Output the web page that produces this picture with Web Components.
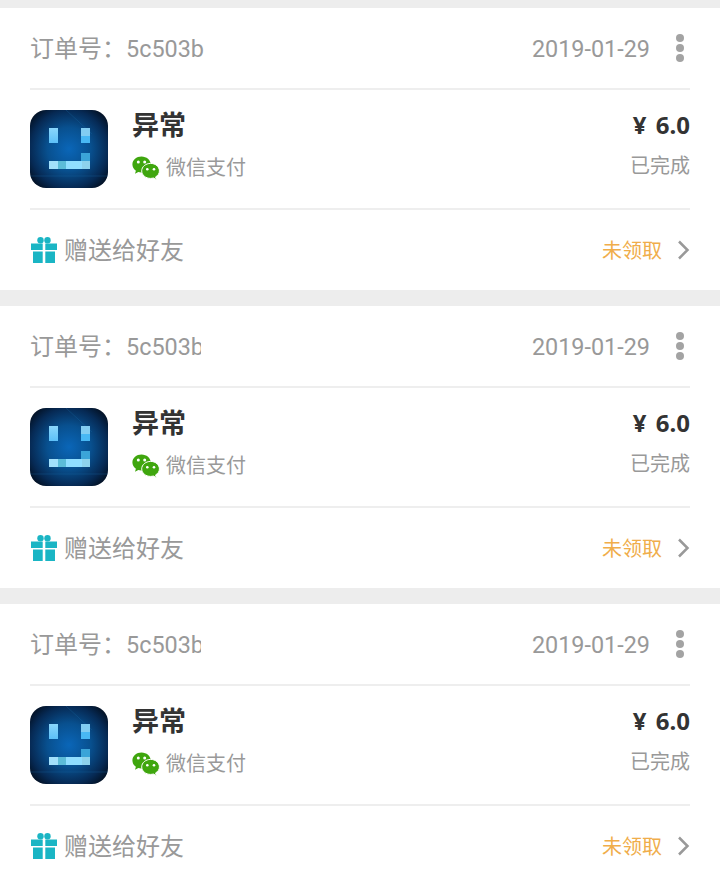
<!DOCTYPE html>
<html lang="zh">
<head>
<meta charset="utf-8">
<title>订单</title>
<style>
    html, body { margin: 0; padding: 0; background: #ededed; }
    body { font-family: Roboto, "Noto Sans CJK SC", sans-serif; }
</style>
</head>
<body>
<order-list>
    <order-card order-no="5c503b" clip="none" date="2019-01-29" price="¥ 6.0" state="已完成" gift="未领取"></order-card>
    <order-card order-no="5c503b" clip="75px" date="2019-01-29" price="¥ 6.0" state="已完成" gift="未领取"></order-card>
    <order-card order-no="5c503b" clip="75px" date="2019-01-29" price="¥ 6.0" state="已完成" gift="未领取"></order-card>
</order-list>

<template id="app-icon-tpl">
    <style>
        :host { display: block; width: 78px; height: 78px; }
        svg { display: block; }
    </style>
    <svg width="78" height="78" viewBox="0 0 78 78">
        <defs>
            <radialGradient id="bg" cx="50%" cy="50%" r="62%">
                <stop offset="0" stop-color="#0a66b8"/>
                <stop offset=".45" stop-color="#08508f"/>
                <stop offset=".8" stop-color="#062a55"/>
                <stop offset="1" stop-color="#031226"/>
            </radialGradient>
            <linearGradient id="eye" x1="0" y1="0" x2="0" y2="1">
                <stop offset="0" stop-color="#8ad6fc"/>
                <stop offset="1" stop-color="#5cc0f8"/>
            </linearGradient>
        </defs>
        <rect width="78" height="78" rx="16" fill="url(#bg)"/>
        <path d="M36 0L62 24M0 66H78" stroke="#1a6da8" stroke-width="1" opacity=".3" fill="none"/>
        <rect x="19" y="18" width="9" height="15" fill="url(#eye)"/>
        <rect x="51" y="18" width="9" height="8" fill="#82cdf2"/>
        <rect x="51" y="26" width="9" height="7" fill="#48b8f4"/>
        <rect x="51" y="43" width="9" height="8" fill="#3ba4d8"/>
        <rect x="19" y="51" width="9" height="8" fill="#a2e0fb"/>
        <rect x="28" y="51" width="8" height="8" fill="#5cbcd8"/>
        <rect x="36" y="51" width="16" height="8" fill="#90deff"/>
        <rect x="52" y="51" width="8" height="8" fill="#8dd2ec"/>
    </svg>
</template>

<template id="wechat-icon-tpl">
    <style>
        :host { display: block; width: 28px; height: 26px; }
        svg { display: block; }
    </style>
    <svg width="28" height="26" viewBox="0 0 28 26">
        <path d="M9.500 1.500C4.500 1.500.4 5 .4 9.500c0 2.600 1.400 4.800 3.500 6.200l-.9 3 3.300-1.700c1 .3 1.900.4 2.900.4 5 0 9.600-3.500 9.600-7.900S14.500 1.500 9.500 1.500z" fill="#3fa60e"/>
        <path d="M18.600 8.400c-5 0-8.900 3.400-8.900 7.500s3.900 7.500 8.900 7.500c1 0 1.900-.2 2.800-.4l3 1.700-.8-2.800c2.500-1.300 3.800-3.600 3.800-6 0-4.100-3.800-7.500-8.800-7.500z" fill="#3fa60e" stroke="#fff" stroke-width="1"/>
        <circle cx="6.300" cy="7" r="1.500" fill="#fff"/>
        <circle cx="12.700" cy="7" r="1.500" fill="#fff"/>
        <circle cx="15.300" cy="14.300" r="1.300" fill="#fff"/>
        <circle cx="22" cy="14.300" r="1.300" fill="#fff"/>
    </svg>
</template>

<template id="gift-icon-tpl">
    <style>
        :host { display: block; width: 26px; height: 26px; }
        svg { display: block; }
    </style>
    <svg width="26" height="26" viewBox="0 0 26 26">
        <circle cx="9.500" cy="3.200" r="3.200" fill="#1ab5c4"/>
        <circle cx="16.500" cy="3.200" r="3.200" fill="#1ab5c4"/>
        <rect x="0" y="6.500" width="11.700" height="6.500" fill="#1ab5c4"/>
        <rect x="14.300" y="6.500" width="11.700" height="6.500" fill="#1ab5c4"/>
        <rect x="2" y="14.500" width="9.700" height="11.500" fill="#1ab5c4"/>
        <rect x="14.300" y="14.500" width="9.700" height="11.500" fill="#1ab5c4"/>
    </svg>
</template>

<template id="order-card-tpl">
    <style>
        :host { display: block; background: #fff; padding: 0 30px; color: #999; }
        .head { height: 80px; display: flex; align-items: center; border-bottom: 2px solid #eee; font-size: 24px; }
        .no { display: flex; align-items: center; flex: 1; color: #999; }
        .no-label { margin-bottom: 4px; }
        .no-val { display: block; overflow: hidden; white-space: nowrap; font-size: 23.400px; margin-top: 2px; }
        .date { color: #999; font-size: 23.400px; margin-top: 2px; }
        .dots { width: 8px; margin-left: 26px; margin-right: 6px; display: flex; flex-direction: column; gap: 2px; }
        .dots i { display: block; width: 8px; height: 8px; border-radius: 50%; background: #a3a3a3; }
        .body { height: 118px; display: flex; align-items: center; border-bottom: 2px solid #eee; }
        .info { flex: 1; margin-left: 24px; margin-bottom: 8px; }
        .title { font-size: 27px; line-height: 36px; font-weight: 700; color: #333; }
        .pay { display: flex; align-items: center; margin-top: 10px; font-size: 20px; line-height: 28px; }
        .pay span { margin-left: 6px; }
        .right { text-align: right; margin-bottom: 9px; }
        .price { font-size: 24px; line-height: 32px; font-weight: 700; color: #333; word-spacing: 3px; font-family: "Noto Sans", "Noto Sans CJK SC", sans-serif; }
        .state { font-size: 20px; line-height: 28px; margin-top: 11px; }
        .foot { height: 80px; display: flex; align-items: center; font-size: 24px; }
        gift-icon { margin-left: 1px; }
        .send { flex: 1; margin-left: 7px; margin-bottom: 4px; }
        .gift { font-size: 20px; color: #f0ad4a; margin-bottom: 2px; }
        svg.arrow { display: block; margin-left: 15px; }
    </style>
    <div class="head">
        <div class="no"><span class="no-label">订单号：</span><span class="no-val"></span></div>
        <span class="date"></span>
        <div class="dots"><i></i><i></i><i></i></div>
    </div>
    <div class="body">
        <app-icon></app-icon>
        <div class="info">
            <div class="title">异常</div>
            <div class="pay"><wechat-icon></wechat-icon><span>微信支付</span></div>
        </div>
        <div class="right">
            <div class="price"></div>
            <div class="state"></div>
        </div>
    </div>
    <div class="foot">
        <gift-icon></gift-icon>
        <span class="send">赠送给好友</span>
        <span class="gift"></span>
        <svg class="arrow" width="13" height="20" viewBox="0 0 13 20"><path d="M2 1.500L10.500 10 2 18.500" fill="none" stroke="#999" stroke-width="2.500"/></svg>
    </div>
</template>

<template id="order-list-tpl">
    <style>
        :host { display: flex; flex-direction: column; gap: 16px; padding-top: 8px; background: #ededed; }
    </style>
    <slot></slot>
</template>

<script>
    function stamp(el, id) {
        el.attachShadow({ mode: 'open' })
            .appendChild(document.getElementById(id).content.cloneNode(true));
    }

    class AppIcon extends HTMLElement {
        constructor() { super(); stamp(this, 'app-icon-tpl'); }
    }
    class WechatIcon extends HTMLElement {
        constructor() { super(); stamp(this, 'wechat-icon-tpl'); }
    }
    class GiftIcon extends HTMLElement {
        constructor() { super(); stamp(this, 'gift-icon-tpl'); }
    }
    class OrderList extends HTMLElement {
        constructor() { super(); stamp(this, 'order-list-tpl'); }
    }
    class OrderCard extends HTMLElement {
        constructor() { super(); stamp(this, 'order-card-tpl'); }

        connectedCallback() {
            let root = this.shadowRoot;
            let no = root.querySelector('.no-val');
            no.textContent = this.getAttribute('order-no');
            if (this.getAttribute('clip') !== 'none') no.style.width = this.getAttribute('clip');
            root.querySelector('.date').textContent = this.getAttribute('date');
            root.querySelector('.price').textContent = this.getAttribute('price');
            root.querySelector('.state').textContent = this.getAttribute('state');
            root.querySelector('.gift').textContent = this.getAttribute('gift');
        }
    }

    customElements.define('app-icon', AppIcon);
    customElements.define('wechat-icon', WechatIcon);
    customElements.define('gift-icon', GiftIcon);
    customElements.define('order-card', OrderCard);
    customElements.define('order-list', OrderList);
</script>
</body>
</html>
